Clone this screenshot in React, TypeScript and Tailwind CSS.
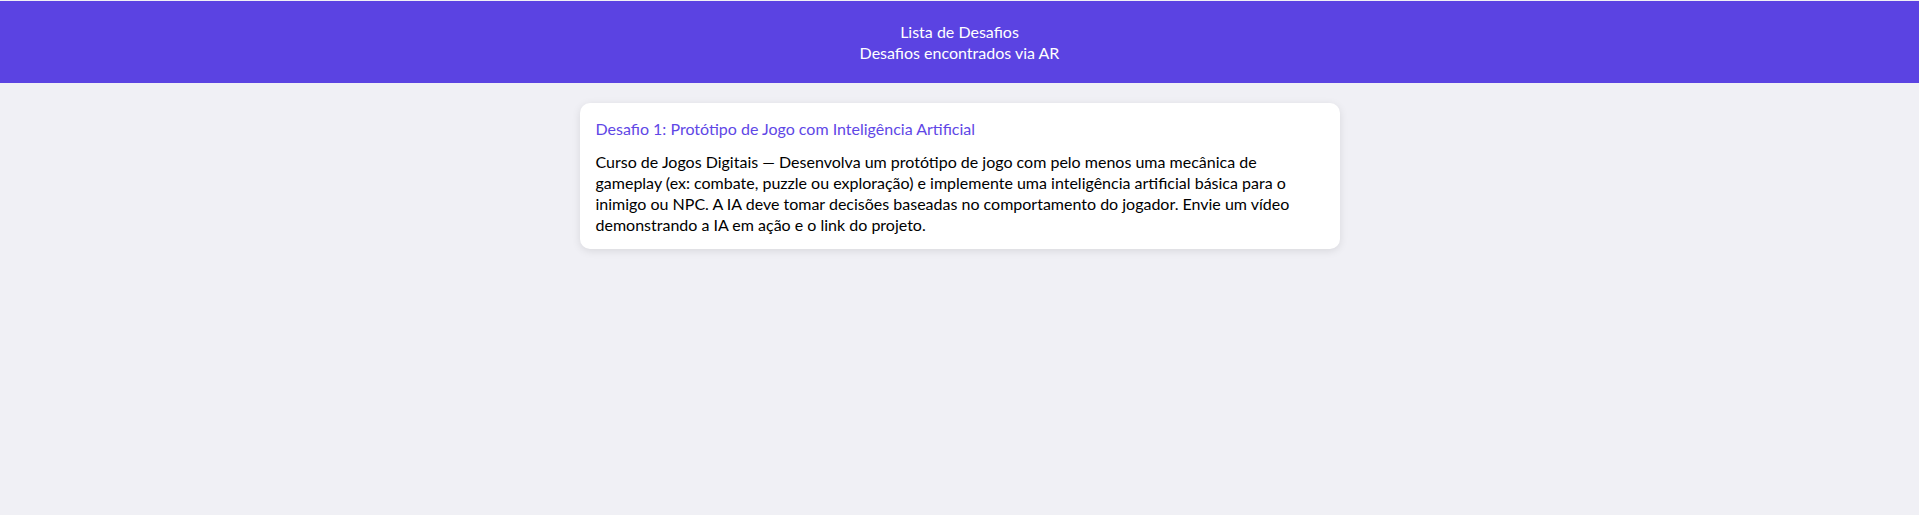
export default function App() {
  return (
    <div className="min-h-[515px] bg-[#f0f0f5] pt-px font-['Lato','Noto_Sans',sans-serif] text-base">
      <header className="bg-[#5b43e2] py-5 text-center leading-[21px] text-white">
        <h1>Lista de Desafios</h1>
        <p>Desafios encontrados via AR</p>
      </header>

      <main className="mx-auto mt-5 max-w-[760px]">
        <div className="rounded-[10px] bg-white px-4 pt-[15px] pb-[14px] shadow-[0_2px_8px_rgba(0,0,0,0.1)]">
          <h3 className="mb-[12px] leading-[21px] text-[#6047e6]">
            Desafio 1: Protótipo de Jogo com Inteligência Artificial
          </h3>
          <p className="leading-[21px] text-black">
            Curso de Jogos Digitais — Desenvolva um protótipo de jogo com pelo menos uma mecânica de
            gameplay (ex: combate, puzzle ou exploração) e implemente uma inteligência artificial básica
            para o inimigo ou NPC. A IA deve tomar decisões baseadas no comportamento do jogador. Envie
            um vídeo demonstrando a IA em ação e o link do projeto.
          </p>
        </div>
      </main>
    </div>
  );
}
